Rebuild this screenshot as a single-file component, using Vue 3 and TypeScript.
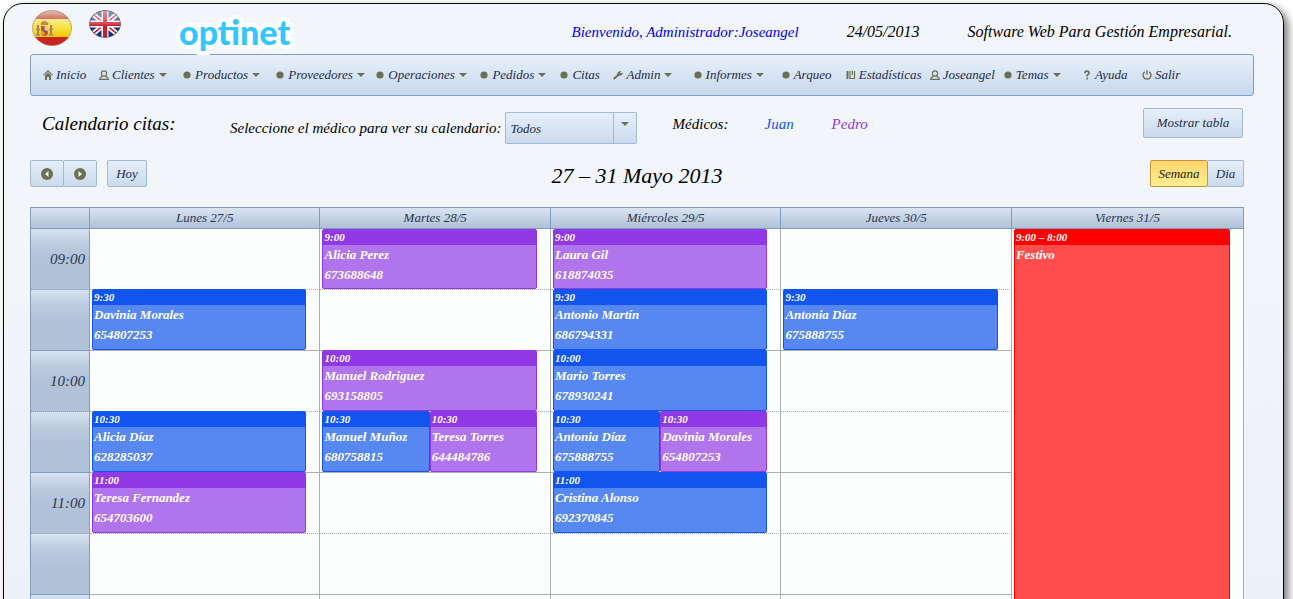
<script setup lang="ts">
import { ref } from 'vue'

type Icon = 'home' | 'person' | 'bullet' | 'wrench' | 'chart' | 'help' | 'power'
interface MenuItem { label: string; icon: Icon; sub?: boolean }
interface Appt { time: string; name: string; phone?: string; kind: 'blue' | 'purple' | 'red' }

const menu: MenuItem[] = [
  { label: 'Inicio', icon: 'home' },
  { label: 'Clientes', icon: 'person', sub: true },
  { label: 'Productos', icon: 'bullet', sub: true },
  { label: 'Proveedores', icon: 'bullet', sub: true },
  { label: 'Operaciones', icon: 'bullet', sub: true },
  { label: 'Pedidos', icon: 'bullet', sub: true },
  { label: 'Citas', icon: 'bullet' },
  { label: 'Admin', icon: 'wrench', sub: true },
  { label: 'Informes', icon: 'bullet', sub: true },
  { label: 'Arqueo', icon: 'bullet' },
  { label: 'Estadísticas', icon: 'chart' },
  { label: 'Joseangel', icon: 'person' },
  { label: 'Temas', icon: 'bullet', sub: true },
  { label: 'Ayuda', icon: 'help' },
  { label: 'Salir', icon: 'power' },
]

const doctor = ref('Todos')
const days = ['Lunes 27/5', 'Martes 28/5', 'Miércoles 29/5', 'Jueves 30/5', 'Viernes 31/5']

const blue = (time: string, name: string, phone: string): Appt => ({ time, name, phone, kind: 'blue' })
const purple = (time: string, name: string, phone: string): Appt => ({ time, name, phone, kind: 'purple' })

const holiday: Appt = { time: '9:00 – 8:00', name: 'Festivo', kind: 'red' }

const rows: { label: string; cells: Appt[][] }[] = [
  { label: '09:00', cells: [[], [purple('9:00', 'Alicia Perez', '673688648')], [purple('9:00', 'Laura Gil', '618874035')], []] },
  { label: '', cells: [[blue('9:30', 'Davinia Morales', '654807253')], [], [blue('9:30', 'Antonio Martín', '686794331')], [blue('9:30', 'Antonia Díaz', '675888755')]] },
  { label: '10:00', cells: [[], [purple('10:00', 'Manuel Rodriguez', '693158805')], [blue('10:00', 'Mario Torres', '678930241')], []] },
  { label: '', cells: [[blue('10:30', 'Alicia Díaz', '628285037')], [blue('10:30', 'Manuel Muñoz', '680758815'), purple('10:30', 'Teresa Torres', '644484786')], [blue('10:30', 'Antonia Díaz', '675888755'), purple('10:30', 'Davinia Morales', '654807253')], []] },
  { label: '11:00', cells: [[purple('11:00', 'Teresa Fernandez', '654703600')], [], [blue('11:00', 'Cristina Alonso', '692370845')], []] },
  { label: '', cells: [[], [], [], []] },
  { label: '', cells: [[], [], [], []] },
]
</script>

<template>
  <div class="viewport">
    <div class="shell">
      <header class="top">
        <div class="flags">
          <button class="flag" type="button" aria-label="Español">
            <svg class="es" viewBox="0 0 40 36">
              <defs>
                <clipPath id="esClip"><ellipse cx="20" cy="18" rx="19.5" ry="17.5" /></clipPath>
                <linearGradient id="esRed" x1="0" y1="0" x2="0" y2="1"><stop offset="0" stop-color="#e3c3bd" /><stop offset="1" stop-color="#cf6a50" /></linearGradient>
                <linearGradient id="esYellow" x1="0" y1="0" x2="0" y2="1"><stop offset="0" stop-color="#f5ec9c" /><stop offset=".5" stop-color="#f6e13c" /><stop offset="1" stop-color="#f2c800" /></linearGradient>
              </defs>
              <g clip-path="url(#esClip)">
                <rect width="40" height="10" fill="url(#esRed)" />
                <rect y="9" width="40" height="18" fill="url(#esYellow)" />
                <rect y="27" width="40" height="9" fill="#c8261c" />
                <g fill="none" stroke="#c07a5a" stroke-width="2"><path d="M6 15v10M19 15v10" /></g>
                <path d="M4 25h4M17 25h4M4 19l4 1M17 20l4-1" stroke="#8f8894" stroke-width="1.5" />
                <path d="M9 16h7v6q0 4-3.500 4T9 22z" fill="#c5503a" />
                <path d="M12.500 16h3.500v5h-3.500z" fill="#e7c0a0" />
                <path d="M9 21h3.500v4Q9 25 9 21z" fill="#e8a83c" />
                <path d="M9 15q-1-3 1-3 2-2 5 0 2 0 1 3z" fill="#c88a3a" />
                <circle cx="12.500" cy="21" r="1.300" fill="#4a62a0" />
              </g>
              <ellipse cx="20" cy="18" rx="19.500" ry="17.500" fill="none" stroke="#a8603c" stroke-opacity=".5" />
            </svg>
          </button>
          <button class="flag" type="button" aria-label="English">
            <svg class="uk" viewBox="0 0 32 28">
              <defs>
                <clipPath id="ukClip"><ellipse cx="16" cy="14" rx="15.5" ry="13.5" /></clipPath>
                <linearGradient id="ukShine" x1="0" y1="0" x2="0" y2="1"><stop offset="0" stop-color="#fff" stop-opacity=".55" /><stop offset=".5" stop-color="#fff" stop-opacity=".2" /><stop offset=".55" stop-color="#fff" stop-opacity="0" /></linearGradient>
              </defs>
              <g clip-path="url(#ukClip)">
                <rect width="32" height="28" fill="#1d2f72" />
                <path d="M0 1l32 26M32 1L0 27" stroke="#fff" stroke-width="5" />
                <path d="M0 1l32 26M32 1L0 27" stroke="#cf2438" stroke-width="1.700" />
                <path d="M16 0v28M0 14h32" stroke="#fff" stroke-width="7" />
                <path d="M16 0v28M0 14h32" stroke="#cc1b2c" stroke-width="4" />
                <rect width="32" height="28" fill="url(#ukShine)" />
              </g>
              <ellipse cx="16" cy="14" rx="15.500" ry="13.500" fill="none" stroke="#4a4f78" stroke-opacity=".6" />
            </svg>
          </button>
        </div>
        <div class="logo">optinet</div>
        <a class="welcome" href="#">Bienvenido, Administrador:Joseangel</a>
        <time class="date">24/05/2013</time>
        <span class="slogan">Software Web Para Gestión Empresarial.</span>
      </header>

      <nav class="menubar">
        <a v-for="m in menu" :key="m.label" href="#" class="item">
          <span class="icon">
            <svg v-if="m.icon === 'home'" viewBox="0 0 10 10"><path d="M.5 5.300L5 .8l4.500 4.500" fill="none" stroke="currentColor" stroke-width="1.200" /><path d="M2 5.500l3-3 3 3V10H6V7H4v3H2z" fill="currentColor" /></svg>
            <svg v-else-if="m.icon === 'person'" viewBox="0 0 10 10"><circle cx="5" cy="3.500" r="2.600" fill="none" stroke="currentColor" stroke-width="1.100" /><path d="M3.500 6L1 8v1.400h8V8L6.500 6" fill="none" stroke="currentColor" stroke-width="1.100" /><path d="M0 9.500h10" stroke="currentColor" /></svg>
            <svg v-else-if="m.icon === 'bullet'" viewBox="0 0 10 10"><circle cx="5" cy="5" r="3.600" fill="currentColor" /></svg>
            <svg v-else-if="m.icon === 'wrench'" viewBox="0 0 10 10"><path d="M.7 9l5-4.500" stroke="currentColor" stroke-width="2" /><path d="M8.500 1L7 2.500 7.500 3.500 9.800 2.500Q9.500 6 6 5.800L4.200 4Q4.500 1 8.500 1z" fill="currentColor" /></svg>
            <svg v-else-if="m.icon === 'chart'" viewBox="0 0 10 10"><path d="M1.500 1v8" stroke="currentColor" stroke-width="2" /><path d="M4 1v7.500h4.500V1M6.300 1v4" fill="none" stroke="currentColor" stroke-width="1.200" /></svg>
            <svg v-else-if="m.icon === 'help'" viewBox="0 0 10 10"><path d="M3 3.200Q3 1.200 5 1.200T7 3Q7 4.200 5.200 5.200V6.500M5.200 7.800v1.700" fill="none" stroke="currentColor" stroke-width="1.700" /></svg>
            <svg v-else viewBox="0 0 10 10"><path d="M2.800 1.800a4 4 0 1 0 4.400 0M5 .3v4.500" fill="none" stroke="currentColor" stroke-width="1.400" /></svg>
          </span>
          <span>{{ m.label }}</span>
          <i v-if="m.sub" class="caret"></i>
        </a>
      </nav>

      <section class="filters">
        <h1>Calendario citas:</h1>
        <div class="choose">
          <label for="doctor">Seleccione el médico para ver su calendario:</label>
          <span class="picker">
            <select id="doctor" v-model="doctor">
              <option>Todos</option>
              <option>Juan</option>
              <option>Pedro</option>
            </select>
            <span class="trigger"><i class="caret"></i></span>
          </span>
        </div>
        <span class="doctors">Médicos:</span>
        <span class="juan">Juan</span>
        <span class="pedro">Pedro</span>
        <button class="btn show" type="button">Mostrar tabla</button>
      </section>

      <section class="toolbar">
        <div class="group">
          <button class="btn arrow" type="button" aria-label="Anterior">
            <svg viewBox="0 0 12 12"><circle cx="6" cy="6" r="6" fill="#6b7051" /><path d="M7.500 3v6L4 6z" fill="#f2f5fb" /></svg>
          </button>
          <button class="btn arrow" type="button" aria-label="Siguiente">
            <svg viewBox="0 0 12 12"><circle cx="6" cy="6" r="6" fill="#6b7051" /><path d="M4.500 3v6L8 6z" fill="#f2f5fb" /></svg>
          </button>
          <button class="btn today" type="button">Hoy</button>
        </div>
        <h2>27 – 31 Mayo 2013</h2>
        <div class="group end">
          <button class="btn week" type="button">Semana</button>
          <button class="btn day" type="button">Dia</button>
        </div>
      </section>

      <table class="calendar">
        <colgroup>
          <col class="hours" />
          <col v-for="n in 4" :key="n" class="weekday" />
          <col />
        </colgroup>
        <thead>
          <tr>
            <th></th>
            <th v-for="d in days" :key="d" scope="col">{{ d }}</th>
          </tr>
        </thead>
        <tbody>
          <tr v-for="(row, r) in rows" :key="r">
            <th scope="row">{{ row.label }}</th>
            <td v-for="(cell, c) in row.cells" :key="c">
              <div v-if="cell.length" class="slot">
                <article v-for="a in cell" :key="a.name" class="appt" :class="a.kind">
                  <div class="when">{{ a.time }}</div>
                  <div class="who">{{ a.name }}<br />{{ a.phone }}</div>
                </article>
              </div>
            </td>
            <td v-if="r === 0" :rowspan="rows.length" class="full">
              <article class="appt" :class="holiday.kind">
                <div class="when">{{ holiday.time }}</div>
                <div class="who">{{ holiday.name }}</div>
              </article>
            </td>
          </tr>
        </tbody>
      </table>
    </div>
  </div>
</template>

<style>
body { background: #fff; }
</style>

<style scoped>
* { box-sizing: border-box; }
.viewport {
  height: 100vh;
  overflow: hidden;
  padding: 3px 9px 0 3px;
  font-family: "Liberation Serif", "Times New Roman", serif;
  font-style: italic;
  color: #000;
}
.shell {
  padding: 0 29px 24px 26px;
  border: 1px solid #000;
  border-radius: 20px;
  background: linear-gradient(#f2f5fa 250px, #ebf1f8);
  box-shadow: 4px 4px 8px #777;
}
button, select { font: inherit; color: inherit; margin: 0; cursor: pointer; }
a { color: inherit; text-decoration: none; }
h1, h2 { margin: 0; font-weight: normal; }

.top {
  display: flex;
  align-items: center;
  height: 50px;
  padding-top: 6px;
  font-size: 16px;
  white-space: nowrap;
}
.flags { display: flex; align-self: flex-start; align-items: flex-start; gap: 17px; width: 149px; padding-left: 2px; }
.flag { padding: 0; border: 0; background: none; }
.flag svg { display: block; }
.es { width: 40px; height: 36px; }
.uk { width: 32px; height: 28px; }
.logo {
  flex: 1;
  font: 900 34px/40px Lato, sans-serif;
  color: #33c5ff;
  -webkit-text-stroke: 8px #fff;
  stroke-linejoin: round;
  paint-order: stroke fill;
}
.welcome { font-size: 15px; color: #0000ee; }
.date { margin-left: 48px; }
.slogan { margin: 0 22px 0 48px; }

.menubar {
  display: grid;
  grid-template-columns: 56fr 83fr 93fr 100fr 104fr 80fr 54fr 79fr 88fr 65fr 84fr 73fr 79fr 60fr 45fr;
  align-items: center;
  height: 42px;
  padding: 0 66px 0 12px;
  border: 1px solid #7f9dc5;
  border-radius: 3px;
  background: linear-gradient(#e7f1fa, #c8d7ed);
  font-size: 13px;
  color: #1e2b4c;
}
.item { display: flex; align-items: center; gap: 3px; white-space: nowrap; }
.icon { color: #6b7051; }
.icon svg { display: block; width: 10px; height: 10px; }
.caret {
  width: 0;
  height: 0;
  margin-left: 1px;
  border: 4px solid transparent;
  border-top-color: #6b7051;
  border-bottom: 0;
}

.filters {
  display: flex;
  align-items: center;
  height: 64px;
  padding: 0 11px 8px 12px;
  font-size: 15px;
  white-space: nowrap;
}
h1 { width: 188px; font-size: 19px; }
.choose { display: flex; align-items: center; gap: 3px; padding-top: 8px; }
.picker { display: flex; position: relative; width: 132px; height: 32px; }
select {
  appearance: none;
  width: 100%;
  padding: 0 5px;
  border: 1px solid #a0b9d6;
  border-radius: 2px;
  background: linear-gradient(#e6effa, #cbdaee);
  font-size: 13px;
  color: #1e2b4c;
}
.trigger {
  position: absolute;
  inset: 0 0 0 auto;
  width: 24px;
  border-left: 1px solid #a0b9d6;
  padding: 10px 0 0 6px;
  pointer-events: none;
}
.trigger .caret { display: block; }
.doctors { margin-left: 36px; width: 92px; }
.juan { width: 67px; color: #1155ee; }
.pedro { color: #9038e4; }
.btn {
  padding: 0;
  border: 1px solid #a0b9d6;
  border-radius: 2px;
  background: linear-gradient(#e6effa, #cbdaee);
  font-size: 13px;
  color: #1e2b4c;
}
.show { align-self: flex-start; width: 100px; height: 30px; margin: 12px 0 0 auto; }

.toolbar {
  display: grid;
  grid-template-columns: 1fr auto 1fr;
  align-items: center;
  height: 27px;
  padding-right: 10px;
}
.group { display: flex; }
.group .btn { height: 27px; }
.arrow { width: 34px; display: grid; place-items: center; }
.arrow + .arrow { margin-left: -1px; }
.arrow svg { width: 12px; height: 12px; }
.today { width: 40px; margin-left: 10px; }
h2 { padding-top: 4px; font-size: 22px; line-height: 23px; }
.end { justify-content: flex-end; }
.week { width: 58px; border-color: #c6923c; background: linear-gradient(#ffd56c, #ffee90); color: #1c1c1c; }
.day { width: 37px; margin-left: -1px; }
.group .week { position: relative; z-index: 1; }

.calendar {
  width: calc(100% - 10px);
  margin-top: 20px;
  table-layout: fixed;
  border-collapse: separate;
  border-spacing: 0;
  border-left: 1px solid #7f9dc1;
}
.hours { width: 59px; }
.weekday { width: 19%; }
th { font-weight: normal; color: #2a3650; padding: 0; }
thead th {
  height: 22px;
  border: 1px solid #7f9dc1;
  border-left: 0;
  background: linear-gradient(#d9e4f2, #b0c1d7);
  font-size: 13px;
}
tbody th {
  height: 61px;
  padding-right: 4px;
  border-right: 1px solid #7f9dc1;
  border-top: 1px solid #7f9dc1;
  background: linear-gradient(#d6e3f2, #bccbdf 25%, #b2c2d9 50%);
  text-align: right;
  font-size: 15px;
}
td {
  height: 61px;
  padding: 0 13px 0 2px;
  border-right: 1px solid #aaadb2;
  border-top: 1px solid #aaadb2;
  background: #fcfefe;
  vertical-align: top;
}
tbody tr:nth-child(even) > * { border-top-style: dotted; }
tbody tr:first-child > * { border-top: 0; height: 60px; }
.slot { display: flex; height: 61px; margin-top: -1px; }
tr:first-child .slot { height: 60px; margin-top: 0; }
.appt {
  flex: 1;
  min-width: 0;
  border: 1px solid var(--edge);
  border-radius: 2px;
  background: var(--fill);
  color: #fff;
  font-weight: bold;
  font-size: 13px;
  line-height: 20px;
  white-space: nowrap;
}
.when { height: 15px; padding-left: 1px; background: var(--edge); font-size: 11px; line-height: 15px; }
.who { padding-left: 1px; }
.blue { --edge: #1155ee; --fill: #5788f2; }
.purple { --edge: #9038e4; --fill: #b074ec; }
.red { --edge: #ff0000; --fill: #ff4d4d; }
.full .appt { height: 420px; }
</style>
